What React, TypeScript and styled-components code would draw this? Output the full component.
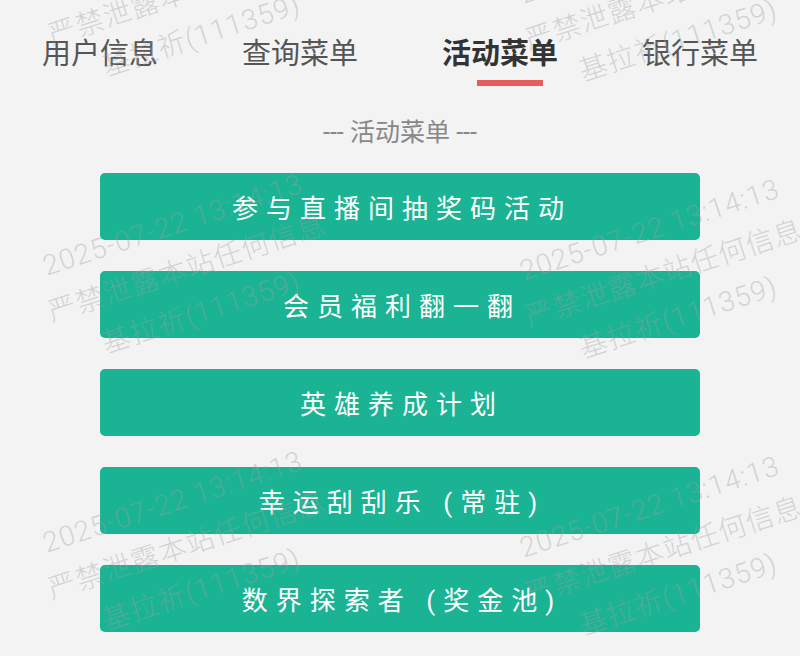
import React, { useState } from 'react';
import styled, { createGlobalStyle } from 'styled-components';

const GlobalStyle = createGlobalStyle`
  html, body {
    margin: 0;
    padding: 0;
    background: #f3f3f4;
  }
  body {
    font-family: Roboto, "Noto Sans CJK SC", "Noto Sans", sans-serif;
  }
`;

const Page = styled.div`
  position: relative;
  width: 100%;
  height: 100vh;
  overflow: hidden;
  background: #f3f3f4;
`;

const TabBar = styled.div`
  display: flex;
  width: 100%;
`;

const Tab = styled.div<{ $active: boolean }>`
  flex: 1;
  display: flex;
  flex-direction: column;
  align-items: center;
  padding-top: 34px;
  font-size: 29px;
  line-height: 40px;
  color: ${(p) => (p.$active ? '#333' : '#555')};
  font-weight: ${(p) => (p.$active ? 700 : 400)};
  cursor: pointer;
`;

const Underline = styled.div<{ $active: boolean }>`
  width: 66px;
  height: 6px;
  margin-top: 6px;
  margin-left: 20px;
  background: ${(p) => (p.$active ? '#e85c5c' : 'transparent')};
`;

const Subtitle = styled.div`
  margin-top: 32px;
  text-align: center;
  font-size: 25px;
  line-height: 30px;
  color: #888;
`;

const MenuList = styled.div`
  display: flex;
  flex-direction: column;
  gap: 31px;
  width: 600px;
  margin: 25px auto 0;
`;

const MenuButton = styled.button`
  height: 67px;
  border: none;
  border-radius: 5px;
  background: #1ab394;
  color: #fff;
  font-family: Roboto, "Noto Sans CJK SC", sans-serif;
  font-size: 26px;
  letter-spacing: 8px;
  padding: 0 0 0 4px;
  cursor: pointer;
`;

const WatermarkLayer = styled.div`
  position: absolute;
  inset: 0;
  pointer-events: none;
  overflow: hidden;
`;

const WatermarkBlock = styled.div`
  position: absolute;
  transform: translate(-50%, -50%) rotate(-18deg);
  text-align: center;
  white-space: nowrap;
  font-family: Roboto, "Noto Sans CJK SC", sans-serif;
  font-size: 28px;
  font-weight: 300;
  line-height: 46px;
  letter-spacing: 1px;
  color: rgba(160, 160, 160, 0.4);
`;

const tabs = ['用户信息', '查询菜单', '活动菜单', '银行菜单'];

const menus = [
  '参与直播间抽奖码活动',
  '会员福利翻一翻',
  '英雄养成计划',
  '幸运刮刮乐 (常驻)',
  '数界探索者 (奖金池)',
];

const marks: { x: number; y: number }[] = [];
for (let row = 0; row < 3; row++) {
  for (let col = 0; col < 2; col++) {
    marks.push({ x: 187 + col * 477, y: -8 + row * 277 + col * 5 });
  }
}

export default function App() {
  const [active, setActive] = useState(2);

  return (
    <Page>
      <GlobalStyle />
      <TabBar>
        {tabs.map((t, i) => (
          <Tab key={t} $active={i === active} onClick={() => setActive(i)}>
            {t}
            <Underline $active={i === active} />
          </Tab>
        ))}
      </TabBar>

      <Subtitle>--- {tabs[active]} ---</Subtitle>

      <MenuList>
        {menus.map((m) => (
          <MenuButton key={m}>{m}</MenuButton>
        ))}
      </MenuList>

      <WatermarkLayer>
        {marks.map((m, i) => (
          <WatermarkBlock key={i} style={{ left: m.x, top: m.y }}>
            2025-07-22 13:14:13
            <br />
            严禁泄露本站任何信息
            <br />
            基拉祈(111359)
          </WatermarkBlock>
        ))}
      </WatermarkLayer>
    </Page>
  );
}
